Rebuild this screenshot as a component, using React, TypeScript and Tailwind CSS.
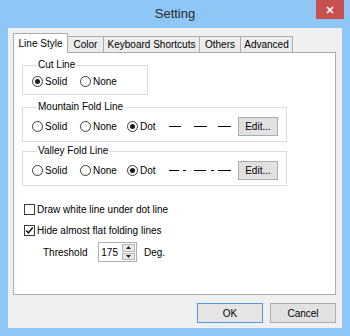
import React from 'react';

function Radio({ label, checked = false, className = '' }: { label: string; checked?: boolean; className?: string }) {
  return (
    <label className={`flex items-center gap-[2px] ${className}`}>
      <span className="flex h-[11px] w-[11px] items-center justify-center rounded-full border border-[#3a3a3a] bg-white">
        {checked && <span className="h-[5px] w-[5px] rounded-full bg-[#1c1c1c]" />}
      </span>
      <span>{label}</span>
    </label>
  );
}

function Checkbox({ label, checked = false }: { label: string; checked?: boolean }) {
  return (
    <label className="flex h-[14px] items-center gap-[2px]">
      <span className="flex h-[11px] w-[11px] items-center justify-center border border-[#3a3a3a] bg-white">
        {checked && (
          <svg width="9" height="9" viewBox="0 0 9 9">
            <path d="M1.2 4.6L3.4 6.9L7.8 1.6" fill="none" stroke="#1c1c1c" strokeWidth="1.6" />
          </svg>
        )}
      </span>
      <span>{label}</span>
    </label>
  );
}

function GroupBox({ title, className = '', children }: { title: string; className?: string; children: React.ReactNode }) {
  return (
    <fieldset className={`border border-[#dcdcdc] pb-[5px] pl-[9px] ${className}`}>
      <legend className="ml-[5px] px-[1px] leading-[14px]">{title}</legend>
      {children}
    </fieldset>
  );
}

function EditButton() {
  return (
    <button className="ml-[6px] flex h-[19px] w-[40px] items-center justify-center border border-[#adadad] bg-[#e1e1e1]">
      Edit...
    </button>
  );
}

const tabs = [
  { label: 'Color', w: 'w-[37px]' },
  { label: 'Keyboard Shortcuts', w: 'w-[97px]' },
  { label: 'Others', w: 'w-[42px]' },
  { label: 'Advanced', w: 'w-[53px]' },
];

export default function App() {
  return (
    <div className="flex h-[336px] w-[350px] flex-col bg-[#8ec7f5] font-['Liberation_Sans',Arial,sans-serif] text-[10px] text-black">
      {/* Title bar */}
      <div className="relative flex h-[28px] items-center justify-center">
        <span className="text-[13px] text-[#2b2b2b]">Setting</span>
        <button className="absolute right-[6px] top-0 flex h-[19px] w-[28px] items-center justify-center bg-[#c75050]">
          <svg width="8" height="8" viewBox="0 0 8 8">
            <path d="M1 1L7 7M7 1L1 7" stroke="white" strokeWidth="1.7" />
          </svg>
        </button>
      </div>

      {/* Client area */}
      <div className="mx-[8px] mb-[8px] flex flex-1 flex-col bg-[#f0f0f0] pl-[5px] pr-[6px] pt-[5px]">
        {/* Tabs */}
        <div className="flex h-[19px] items-end">
          <div className="relative z-10 -mb-px flex h-[20px] w-[55px] items-center justify-center border border-b-0 border-[#acacac] bg-white">
            Line Style
          </div>
          {tabs.map((t) => (
            <div
              key={t.label}
              className={`-ml-px flex h-[16px] items-center justify-center border border-b-0 border-[#acacac] bg-[#ececec] ${t.w}`}
            >
              {t.label}
            </div>
          ))}
        </div>

        {/* Panel */}
        <div className="flex h-[243px] flex-col border border-[#acacac] bg-white pl-[8px] pt-[5px]">
          <GroupBox title="Cut Line" className="w-[126px]">
            <div className="mt-[3px] flex h-[14px] items-center pb-px">
              <Radio label="Solid" checked className="w-[48px]" />
              <Radio label="None" />
            </div>
          </GroupBox>

          <GroupBox title="Mountain Fold Line" className="mt-[5px] w-[265px]">
            <div className="mt-[3px] flex h-[19px] items-center">
              <Radio label="Solid" className="w-[48px]" />
              <Radio label="None" className="w-[47px]" />
              <Radio label="Dot" checked className="w-[39px]" />
              <svg width="66" height="3" viewBox="0 0 66 3">
                <path d="M3 1.5H15M28 1.5H41M52 1.5H65" stroke="#000" strokeWidth="1" />
              </svg>
              <EditButton />
            </div>
          </GroupBox>

          <GroupBox title="Valley Fold Line" className="mt-[2px] w-[265px]">
            <div className="mt-[3px] flex h-[19px] items-center">
              <Radio label="Solid" className="w-[48px]" />
              <Radio label="None" className="w-[47px]" />
              <Radio label="Dot" checked className="w-[39px]" />
              <svg width="66" height="3" viewBox="0 0 66 3">
                <path d="M3 1.5H13M17 1.5H20M28 1.5H40M45 1.5H48M52 1.5H65" stroke="#000" strokeWidth="1" />
              </svg>
              <EditButton />
            </div>
          </GroupBox>

          <div className="mt-[16px] flex flex-col gap-[7px] pl-[2px]">
            <Checkbox label="Draw white line under dot line" />
            <Checkbox label="Hide almost flat folding lines" checked />
          </div>

          <div className="mt-[5px] flex items-center pl-[21px]">
            <span className="w-[55px]">Threshold</span>
            <div className="flex h-[20px] w-[39px] border border-[#abadb3] bg-white">
              <span className="flex flex-1 items-center justify-end pr-[3px]">175</span>
              <div className="flex w-[15px] flex-col gap-px p-px">
                <span className="flex flex-1 items-center justify-center border border-[#b5b5b5] bg-[#e8e8e8]">
                  <svg width="5" height="3" viewBox="0 0 5 3">
                    <path d="M0 3L2.5 0L5 3Z" fill="#222" />
                  </svg>
                </span>
                <span className="flex flex-1 items-center justify-center border border-[#b5b5b5] bg-[#e8e8e8]">
                  <svg width="5" height="3" viewBox="0 0 5 3">
                    <path d="M0 0L2.5 3L5 0Z" fill="#222" />
                  </svg>
                </span>
              </div>
            </div>
            <span className="ml-[7px]">Deg.</span>
          </div>
        </div>

        {/* Buttons */}
        <div className="mt-[8px] flex justify-end gap-[7px]">
          <button className="flex h-[20px] w-[66px] items-center justify-center border border-[#4a9be8] bg-[#e5e5e5]">
            OK
          </button>
          <button className="flex h-[20px] w-[66px] items-center justify-center border border-[#adadad] bg-[#e1e1e1]">
            Cancel
          </button>
        </div>
      </div>
    </div>
  );
}
